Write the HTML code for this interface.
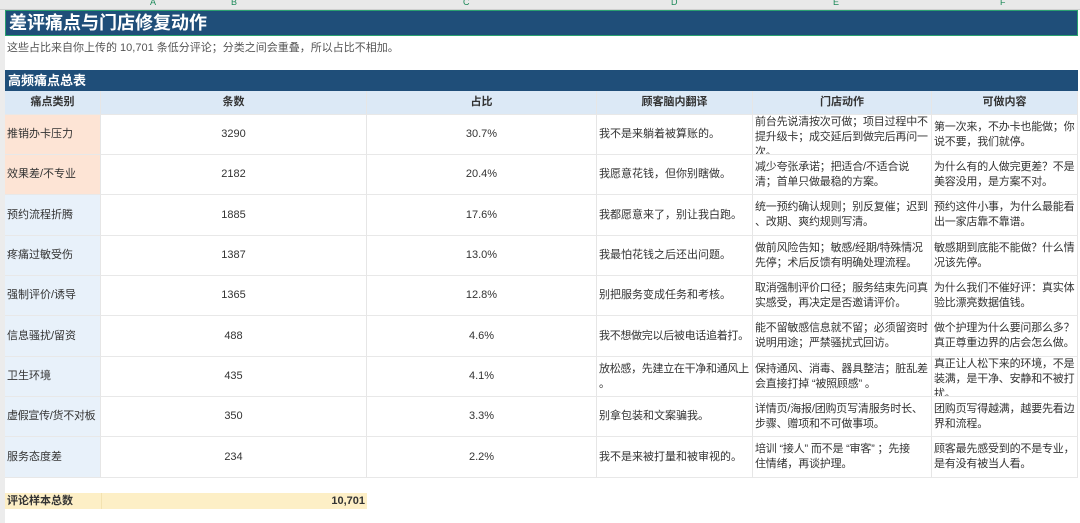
<!DOCTYPE html><html><head><meta charset="utf-8"><style>
*{margin:0;padding:0;box-sizing:border-box}
body{width:1080px;height:523px;overflow:hidden;background:#fff;font-family:"Liberation Sans","Noto Sans CJK SC",sans-serif;color:#333;position:relative}
.a{position:absolute}
.c{position:absolute;font-size:11px;line-height:15px;overflow:hidden;white-space:nowrap;border-right:1px solid #e6e6e6;border-bottom:1px solid #e8e8e8}
.v{display:flex;align-items:center}
.ctr{justify-content:center}
.w{padding:5px 0 0 2px;letter-spacing:-0.2px}
</style></head><body>
<div class="a" style="left:0;top:0;width:1080px;height:10px;background:#e9e9e9;border-bottom:1px solid #d0d0d0"></div>
<div class="a" style="left:150px;top:-3px;font-size:9px;color:#1e8a5a">A</div>
<div class="a" style="left:231px;top:-3px;font-size:9px;color:#1e8a5a">B</div>
<div class="a" style="left:463px;top:-3px;font-size:9px;color:#1e8a5a">C</div>
<div class="a" style="left:671px;top:-3px;font-size:9px;color:#1e8a5a">D</div>
<div class="a" style="left:833px;top:-3px;font-size:9px;color:#1e8a5a">E</div>
<div class="a" style="left:1000px;top:-3px;font-size:9px;color:#1e8a5a">F</div>
<div class="a" style="left:0;top:10px;width:5px;height:513px;background:#ececec"></div>
<div class="a" style="left:5px;top:10px;width:1073px;height:26px;background:#1f4e79;border:1px solid #2aa070;color:#fff;font-weight:bold;font-size:18px;line-height:24px;padding-left:3px">差评痛点与门店修复动作</div>
<div class="a" style="left:7px;top:39px;font-size:11px;color:#555">这些占比来自你上传的 10,701 条低分评论；分类之间会重叠，所以占比不相加。</div>
<div class="a" style="left:5px;top:70px;width:1073px;height:21px;background:#1f4e79;color:#fff;font-weight:bold;font-size:13px;line-height:21px;padding-left:3px">高频痛点总表</div>
<div class="a" style="left:5px;top:91px;width:1073px;height:24px;background:#dce9f6"></div>
<div class="c v ctr" style="left:5px;top:91px;width:96px;height:24px;font-weight:bold">痛点类别</div>
<div class="c v ctr" style="left:101px;top:91px;width:266px;height:24px;font-weight:bold">条数</div>
<div class="c v ctr" style="left:367px;top:91px;width:230px;height:24px;font-weight:bold">占比</div>
<div class="c v ctr" style="left:597px;top:91px;width:156px;height:24px;font-weight:bold">顾客脑内翻译</div>
<div class="c v ctr" style="left:753px;top:91px;width:179px;height:24px;font-weight:bold">门店动作</div>
<div class="c v ctr" style="left:932px;top:91px;width:146px;height:24px;font-weight:bold">可做内容</div>

<div class="c v" style="left:5px;top:115px;width:96px;height:40px;background:#fde4d5;padding-left:2px">推销办卡压力</div>
<div class="c v ctr" style="left:101px;top:115px;width:266px;height:40px">3290</div>
<div class="c v ctr" style="left:367px;top:115px;width:230px;height:40px">30.7%</div>
<div class="c v" style="left:597px;top:115px;width:156px;height:40px;padding-left:2px">我不是来躺着被算账的。</div>
<div class="c w" style="left:753px;top:115px;width:179px;height:40px;padding-top:0">前台先说清按次可做；项目过程中不<br>提升级卡；成交延后到做完后再问一<br>次。</div>
<div class="c w" style="left:932px;top:115px;width:146px;height:40px">第一次来，不办卡也能做；你<br>说不要，我们就停。</div>

<div class="c v" style="left:5px;top:155px;width:96px;height:40px;background:#fde4d5;padding-left:2px">效果差/不专业</div>
<div class="c v ctr" style="left:101px;top:155px;width:266px;height:40px">2182</div>
<div class="c v ctr" style="left:367px;top:155px;width:230px;height:40px">20.4%</div>
<div class="c v" style="left:597px;top:155px;width:156px;height:40px;padding-left:2px">我愿意花钱，但你别瞎做。</div>
<div class="c w" style="left:753px;top:155px;width:179px;height:40px">减少夸张承诺；把适合/不适合说<br>清；首单只做最稳的方案。</div>
<div class="c w" style="left:932px;top:155px;width:146px;height:40px">为什么有的人做完更差？不是<br>美容没用，是方案不对。</div>

<div class="c v" style="left:5px;top:195px;width:96px;height:41px;background:#e8f1fa;padding-left:2px">预约流程折腾</div>
<div class="c v ctr" style="left:101px;top:195px;width:266px;height:41px">1885</div>
<div class="c v ctr" style="left:367px;top:195px;width:230px;height:41px">17.6%</div>
<div class="c v" style="left:597px;top:195px;width:156px;height:41px;padding-left:2px">我都愿意来了，别让我白跑。</div>
<div class="c w" style="left:753px;top:195px;width:179px;height:41px">统一预约确认规则；别反复催；迟到<br>、改期、爽约规则写清。</div>
<div class="c w" style="left:932px;top:195px;width:146px;height:41px">预约这件小事，为什么最能看<br>出一家店靠不靠谱。</div>

<div class="c v" style="left:5px;top:236px;width:96px;height:40px;background:#e8f1fa;padding-left:2px">疼痛过敏受伤</div>
<div class="c v ctr" style="left:101px;top:236px;width:266px;height:40px">1387</div>
<div class="c v ctr" style="left:367px;top:236px;width:230px;height:40px">13.0%</div>
<div class="c v" style="left:597px;top:236px;width:156px;height:40px;padding-left:2px">我最怕花钱之后还出问题。</div>
<div class="c w" style="left:753px;top:236px;width:179px;height:40px">做前风险告知；敏感/经期/特殊情况<br>先停；术后反馈有明确处理流程。</div>
<div class="c w" style="left:932px;top:236px;width:146px;height:40px">敏感期到底能不能做？什么情<br>况该先停。</div>

<div class="c v" style="left:5px;top:276px;width:96px;height:40px;background:#e8f1fa;padding-left:2px">强制评价/诱导</div>
<div class="c v ctr" style="left:101px;top:276px;width:266px;height:40px">1365</div>
<div class="c v ctr" style="left:367px;top:276px;width:230px;height:40px">12.8%</div>
<div class="c v" style="left:597px;top:276px;width:156px;height:40px;padding-left:2px">别把服务变成任务和考核。</div>
<div class="c w" style="left:753px;top:276px;width:179px;height:40px">取消强制评价口径；服务结束先问真<br>实感受，再决定是否邀请评价。</div>
<div class="c w" style="left:932px;top:276px;width:146px;height:40px">为什么我们不催好评：真实体<br>验比漂亮数据值钱。</div>

<div class="c v" style="left:5px;top:316px;width:96px;height:41px;background:#e8f1fa;padding-left:2px">信息骚扰/留资</div>
<div class="c v ctr" style="left:101px;top:316px;width:266px;height:41px">488</div>
<div class="c v ctr" style="left:367px;top:316px;width:230px;height:41px">4.6%</div>
<div class="c v" style="left:597px;top:316px;width:156px;height:41px;padding-left:2px;letter-spacing:-0.3px">我不想做完以后被电话追着打。</div>
<div class="c w" style="left:753px;top:316px;width:179px;height:41px">能不留敏感信息就不留；必须留资时<br>说明用途；严禁骚扰式回访。</div>
<div class="c w" style="left:932px;top:316px;width:146px;height:41px">做个护理为什么要问那么多？<br>真正尊重边界的店会怎么做。</div>

<div class="c v" style="left:5px;top:357px;width:96px;height:40px;background:#e8f1fa;padding-left:2px">卫生环境</div>
<div class="c v ctr" style="left:101px;top:357px;width:266px;height:40px">435</div>
<div class="c v ctr" style="left:367px;top:357px;width:230px;height:40px">4.1%</div>
<div class="c w" style="left:597px;top:357px;width:156px;height:40px;letter-spacing:-0.3px">放松感，先建立在干净和通风上<br>。</div>
<div class="c w" style="left:753px;top:357px;width:179px;height:40px">保持通风、消毒、器具整洁；脏乱差<br>会直接打掉 “被照顾感” 。</div>
<div class="c w" style="left:932px;top:357px;width:146px;height:40px;padding-top:0">真正让人松下来的环境，不是<br>装满，是干净、安静和不被打<br>扰。</div>

<div class="c v" style="left:5px;top:397px;width:96px;height:40px;background:#e8f1fa;padding-left:2px;letter-spacing:-0.3px">虚假宣传/货不对板</div>
<div class="c v ctr" style="left:101px;top:397px;width:266px;height:40px">350</div>
<div class="c v ctr" style="left:367px;top:397px;width:230px;height:40px">3.3%</div>
<div class="c v" style="left:597px;top:397px;width:156px;height:40px;padding-left:2px">别拿包装和文案骗我。</div>
<div class="c w" style="left:753px;top:397px;width:179px;height:40px">详情页/海报/团购页写清服务时长、<br>步骤、赠项和不可做事项。</div>
<div class="c w" style="left:932px;top:397px;width:146px;height:40px">团购页写得越满，越要先看边<br>界和流程。</div>

<div class="c v" style="left:5px;top:437px;width:96px;height:41px;background:#e8f1fa;padding-left:2px">服务态度差</div>
<div class="c v ctr" style="left:101px;top:437px;width:266px;height:41px">234</div>
<div class="c v ctr" style="left:367px;top:437px;width:230px;height:41px">2.2%</div>
<div class="c v" style="left:597px;top:437px;width:156px;height:41px;padding-left:2px">我不是来被打量和被审视的。</div>
<div class="c w" style="left:753px;top:437px;width:179px;height:41px">培训 “接人” 而不是 “审客” ；先接<br>住情绪，再谈护理。</div>
<div class="c w" style="left:932px;top:437px;width:146px;height:41px">顾客最先感受到的不是专业，<br>是有没有被当人看。</div>

<div class="a" style="left:5px;top:493px;width:362px;height:16px;background:#fdefc6"></div>
<div class="a" style="left:7px;top:494px;font-size:11px;font-weight:bold;line-height:15px">评论样本总数</div>
<div class="a" style="left:101px;top:493px;width:1px;height:16px;background:#f3e2b0"></div>
<div class="a" style="left:280px;top:494px;width:85px;text-align:right;font-size:11px;font-weight:bold;line-height:15px">10,701</div>
</body></html>
